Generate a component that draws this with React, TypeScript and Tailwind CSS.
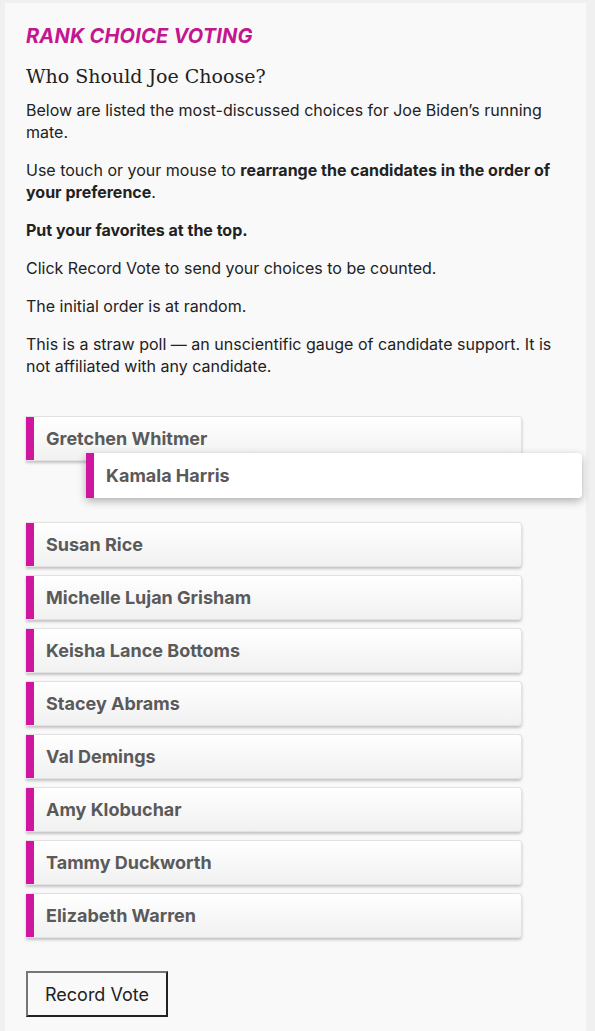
import React from 'react';

const CANDIDATES = [
  'Gretchen Whitmer',
  null,
  'Susan Rice',
  'Michelle Lujan Grisham',
  'Keisha Lance Bottoms',
  'Stacey Abrams',
  'Val Demings',
  'Amy Klobuchar',
  'Tammy Duckworth',
  'Elizabeth Warren',
];

function Item({ name, dragging = false }: { name: string; dragging?: boolean }) {
  return (
    <div
      className={
        dragging
          ? 'absolute left-[60px] top-[37px] w-[496px] h-[45px] flex items-center bg-white rounded-r-[4px] shadow-[0_3px_8px_rgba(0,0,0,0.3)]'
          : 'w-[496px] h-[45px] flex items-center bg-gradient-to-b from-white to-[#f1f1f1] rounded-r-[4px] border border-l-0 border-[#e2e2e2] shadow-[0_2px_3px_rgba(0,0,0,0.22)]'
      }
    >
      <div className="w-[8px] self-stretch bg-[#d0169e] shrink-0" />
      <span className="pl-[12px] text-[18px] font-bold text-[#5a5a5a]">{name}</span>
    </div>
  );
}

export default function App() {
  return (
    <div className="min-h-[1031px] bg-[#f0f0f0] pt-[3px] pl-[5px] pr-[9px] font-['Inter','Noto_Sans',sans-serif]">
      <div className="bg-[#f9f9f9] min-h-[1028px] px-[21px] pt-[20px] pb-[14px]">
        <h1 className="text-[20px] leading-[26px] font-bold italic text-[#c4168f] tracking-[0.2px]">
          RANK CHOICE VOTING
        </h1>
        <h2 className="mt-[14px] text-[19px] leading-[26px] text-[#222] font-['DejaVu_Serif',serif]">
          Who Should Joe Choose?
        </h2>
        <div className="mt-[10px] text-[16px] leading-[22px] text-[#222] flex flex-col gap-[16px]">
          <p>Below are listed the most-discussed choices for Joe Biden’s running mate.</p>
          <p>
            Use touch or your mouse to <b>rearrange the candidates in the order of your preference</b>.
          </p>
          <p>
            <b>Put your favorites at the top.</b>
          </p>
          <p>Click Record Vote to send your choices to be counted.</p>
          <p>The initial order is at random.</p>
          <p>This is a straw poll — an unscientific gauge of candidate support. It is not affiliated with any candidate.</p>
        </div>
        <div className="relative mt-[39px] flex flex-col gap-[8px]">
          {CANDIDATES.map((c, i) =>
            c ? <Item key={i} name={c} /> : <div key={i} className="h-[45px]" />,
          )}
          <Item name="Kamala Harris" dragging />
        </div>
        <button className="mt-[33px] h-[46px] px-[17px] bg-[#f9f9f9] text-[18px] text-[#222] border-2 border-t-[#767676] border-l-[#767676] border-r-[#222] border-b-[#222]">
          Record Vote
        </button>
      </div>
    </div>
  );
}
